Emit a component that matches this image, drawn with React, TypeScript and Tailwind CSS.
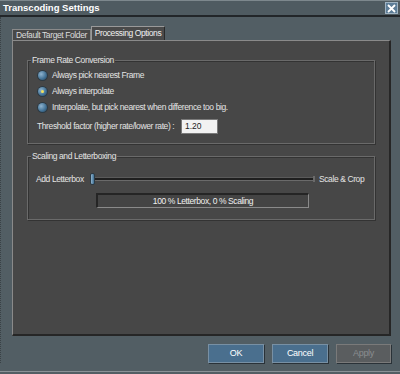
import React from "react";

const body = { fontFamily: '"Liberation Sans", Arial, sans-serif' };

function Radio({ checked, label }: { checked?: boolean; label: string }) {
  return (
    <div className="flex h-[16px] items-center">
      <span className="relative flex h-[9px] w-[9px] items-center justify-center rounded-full bg-[radial-gradient(circle_at_35%_35%,#8fb4cf,#3f6f93_60%,#27465e)] shadow-[0_0_0_1px_#2c3a44]">
        {checked && <span className="h-[3px] w-[3px] rounded-full bg-[#f3e25a]" />}
      </span>
      <span className="ml-[5px] whitespace-nowrap text-[8.5px] tracking-[-0.4px] text-[#e4e4e4]">{label}</span>
    </div>
  );
}

export default function App() {
  return (
    <div className="flex h-[374px] w-[400px] flex-col overflow-hidden bg-[#525e64] select-none" style={body}>
      {/* title bar */}
      <div className="flex h-[15px] items-center justify-between border-t border-[#7d888d] bg-[#4f5b61] pl-[3px] pr-[2px]">
        <span className="whitespace-nowrap text-[9.5px] font-bold leading-none text-white">
          Transcoding Settings
        </span>
        <span className="flex h-[12px] w-[13px] items-center justify-center border border-[#9fb3c2] bg-[#5d7d97]">
          <svg width="9" height="9" viewBox="0 0 9 9">
            <path d="M1 1 L8 8 M8 1 L1 8" stroke="#ffffff" strokeWidth="1.8" />
          </svg>
        </span>
      </div>
      <div className="h-[2px] bg-[#222629]" />

      {/* main area */}
      <div className="flex flex-col border-l border-dotted border-[#3a4246] pl-[11px] pr-[9px] pt-[9px]">
        {/* tabs */}
        <div className="flex h-[14px] items-end">
          <div className="flex h-[11px] w-[79px] items-center justify-center whitespace-nowrap border-l border-t border-r border-[#8a8a8a] bg-[#484848] text-[8.5px] tracking-[-0.4px] text-[#dcdcdc]">
            Default Target Folder
          </div>
          <div className="flex h-[14px] w-[74px] items-center justify-center whitespace-nowrap border-l border-t border-r border-[#9a9a9a] border-r-[#2a2a2a] bg-[#4a4a4a] text-[8.5px] tracking-[-0.4px] text-[#f0f0f0]">
            Processing Options
          </div>
        </div>
        {/* panel */}
        <div className="flex h-[296px] flex-col border-l border-t border-[#8a8a8a] border-r-2 border-b-2 border-r-[#262626] border-b-[#262626] bg-[#474747] pl-[14px] pr-[14px] pt-[19px]">
          {/* group 1 */}
          <div className="relative flex h-[84px] flex-col border border-[#6a6a6a] shadow-[inset_1px_1px_0_#333,1px_1px_0_#333] pl-[10px] pt-[6px]">
            <span className="absolute -top-[7px] left-[3px] whitespace-nowrap bg-[#474747] px-[1px] text-[8.5px] leading-[12px] tracking-[-0.4px] text-[#e4e4e4]">
              Frame Rate Conversion
            </span>
            <Radio label="Always pick nearest Frame" />
            <Radio checked label="Always interpolate" />
            <Radio label="Interpolate, but pick nearest when difference too big." />
            <div className="mt-[3px] flex h-[16px] items-center">
              <span className="-ml-[1px] w-[144px] whitespace-nowrap text-[8.5px] tracking-[-0.4px] text-[#e4e4e4]">Threshold factor (higher rate/lower rate) :</span>
              <div className="flex h-[15px] w-[37px] items-center border border-[#7a7a7a] bg-[#f2f2f2] pl-[3px] text-[8.5px] text-[#222]">
                1.20
              </div>
            </div>
          </div>
          {/* group 2 */}
          <div className="relative mt-[12px] flex h-[64px] flex-col border border-[#6a6a6a] shadow-[inset_1px_1px_0_#333,1px_1px_0_#333] pl-[8px] pt-[14px]">
            <span className="absolute -top-[7px] left-[3px] whitespace-nowrap bg-[#474747] px-[1px] text-[8.5px] leading-[12px] tracking-[-0.4px] text-[#e4e4e4]">
              Scaling and Letterboxing
            </span>
            <div className="flex h-[16px] items-center">
              <span className="w-[54px] whitespace-nowrap text-[8.5px] tracking-[-0.4px] text-[#e4e4e4]">Add Letterbox</span>
              <span className="h-[12px] w-[5px] rounded-[2px] border border-[#2c3a44] bg-[linear-gradient(90deg,#8fb4cf,#3f6f93)]" />
              <div className="flex h-[4px] w-[218px] flex-col">
                <div className="h-[1px] bg-[#5a5a5a]" />
                <div className="h-[2px] bg-[#1f1f1f]" />
                <div className="h-[1px] bg-[#6a6a6a]" />
              </div>
              <span className="h-[6px] w-[2px] bg-[#6a6a6a]" />
              <span className="ml-[4px] whitespace-nowrap text-[8.5px] tracking-[-0.4px] text-[#e4e4e4]">Scale &amp; Crop</span>
            </div>
            <div className="ml-[60px] mt-[6px] flex h-[15px] w-[213px] items-center justify-center whitespace-nowrap border-l-2 border-t-2 border-b border-r border-l-[#252525] border-t-[#252525] border-b-[#8a8a8a] border-r-[#8a8a8a] bg-[#444444] text-[8.5px] tracking-[-0.4px] text-[#f0f0f0]">
              100 % Letterbox, 0 % Scaling
            </div>
          </div>
        </div>
        {/* buttons */}
        <div className="mt-[8px] flex justify-end gap-[8px]">
          <div className="flex h-[19px] w-[56px] items-center justify-center border border-[#7890a4] bg-[#4a6f8e] text-[9px] tracking-[-0.3px] text-white shadow-[1px_1px_0_#2a3238]">OK</div>
          <div className="flex h-[19px] w-[56px] items-center justify-center border border-[#7890a4] bg-[#4a6f8e] text-[9px] tracking-[-0.3px] text-white shadow-[1px_1px_0_#2a3238]">Cancel</div>
          <div className="flex h-[19px] w-[55px] items-center justify-center border border-[#7a7a7a] bg-[#5a5d5f] text-[9px] tracking-[-0.3px] text-[#8a8d90] shadow-[1px_1px_0_#2a3238]">Apply</div>
        </div>
      </div>
      <div className="mt-auto h-[3px] border-t border-[#8a9297] bg-[#525e64]" />
    </div>
  );
}
